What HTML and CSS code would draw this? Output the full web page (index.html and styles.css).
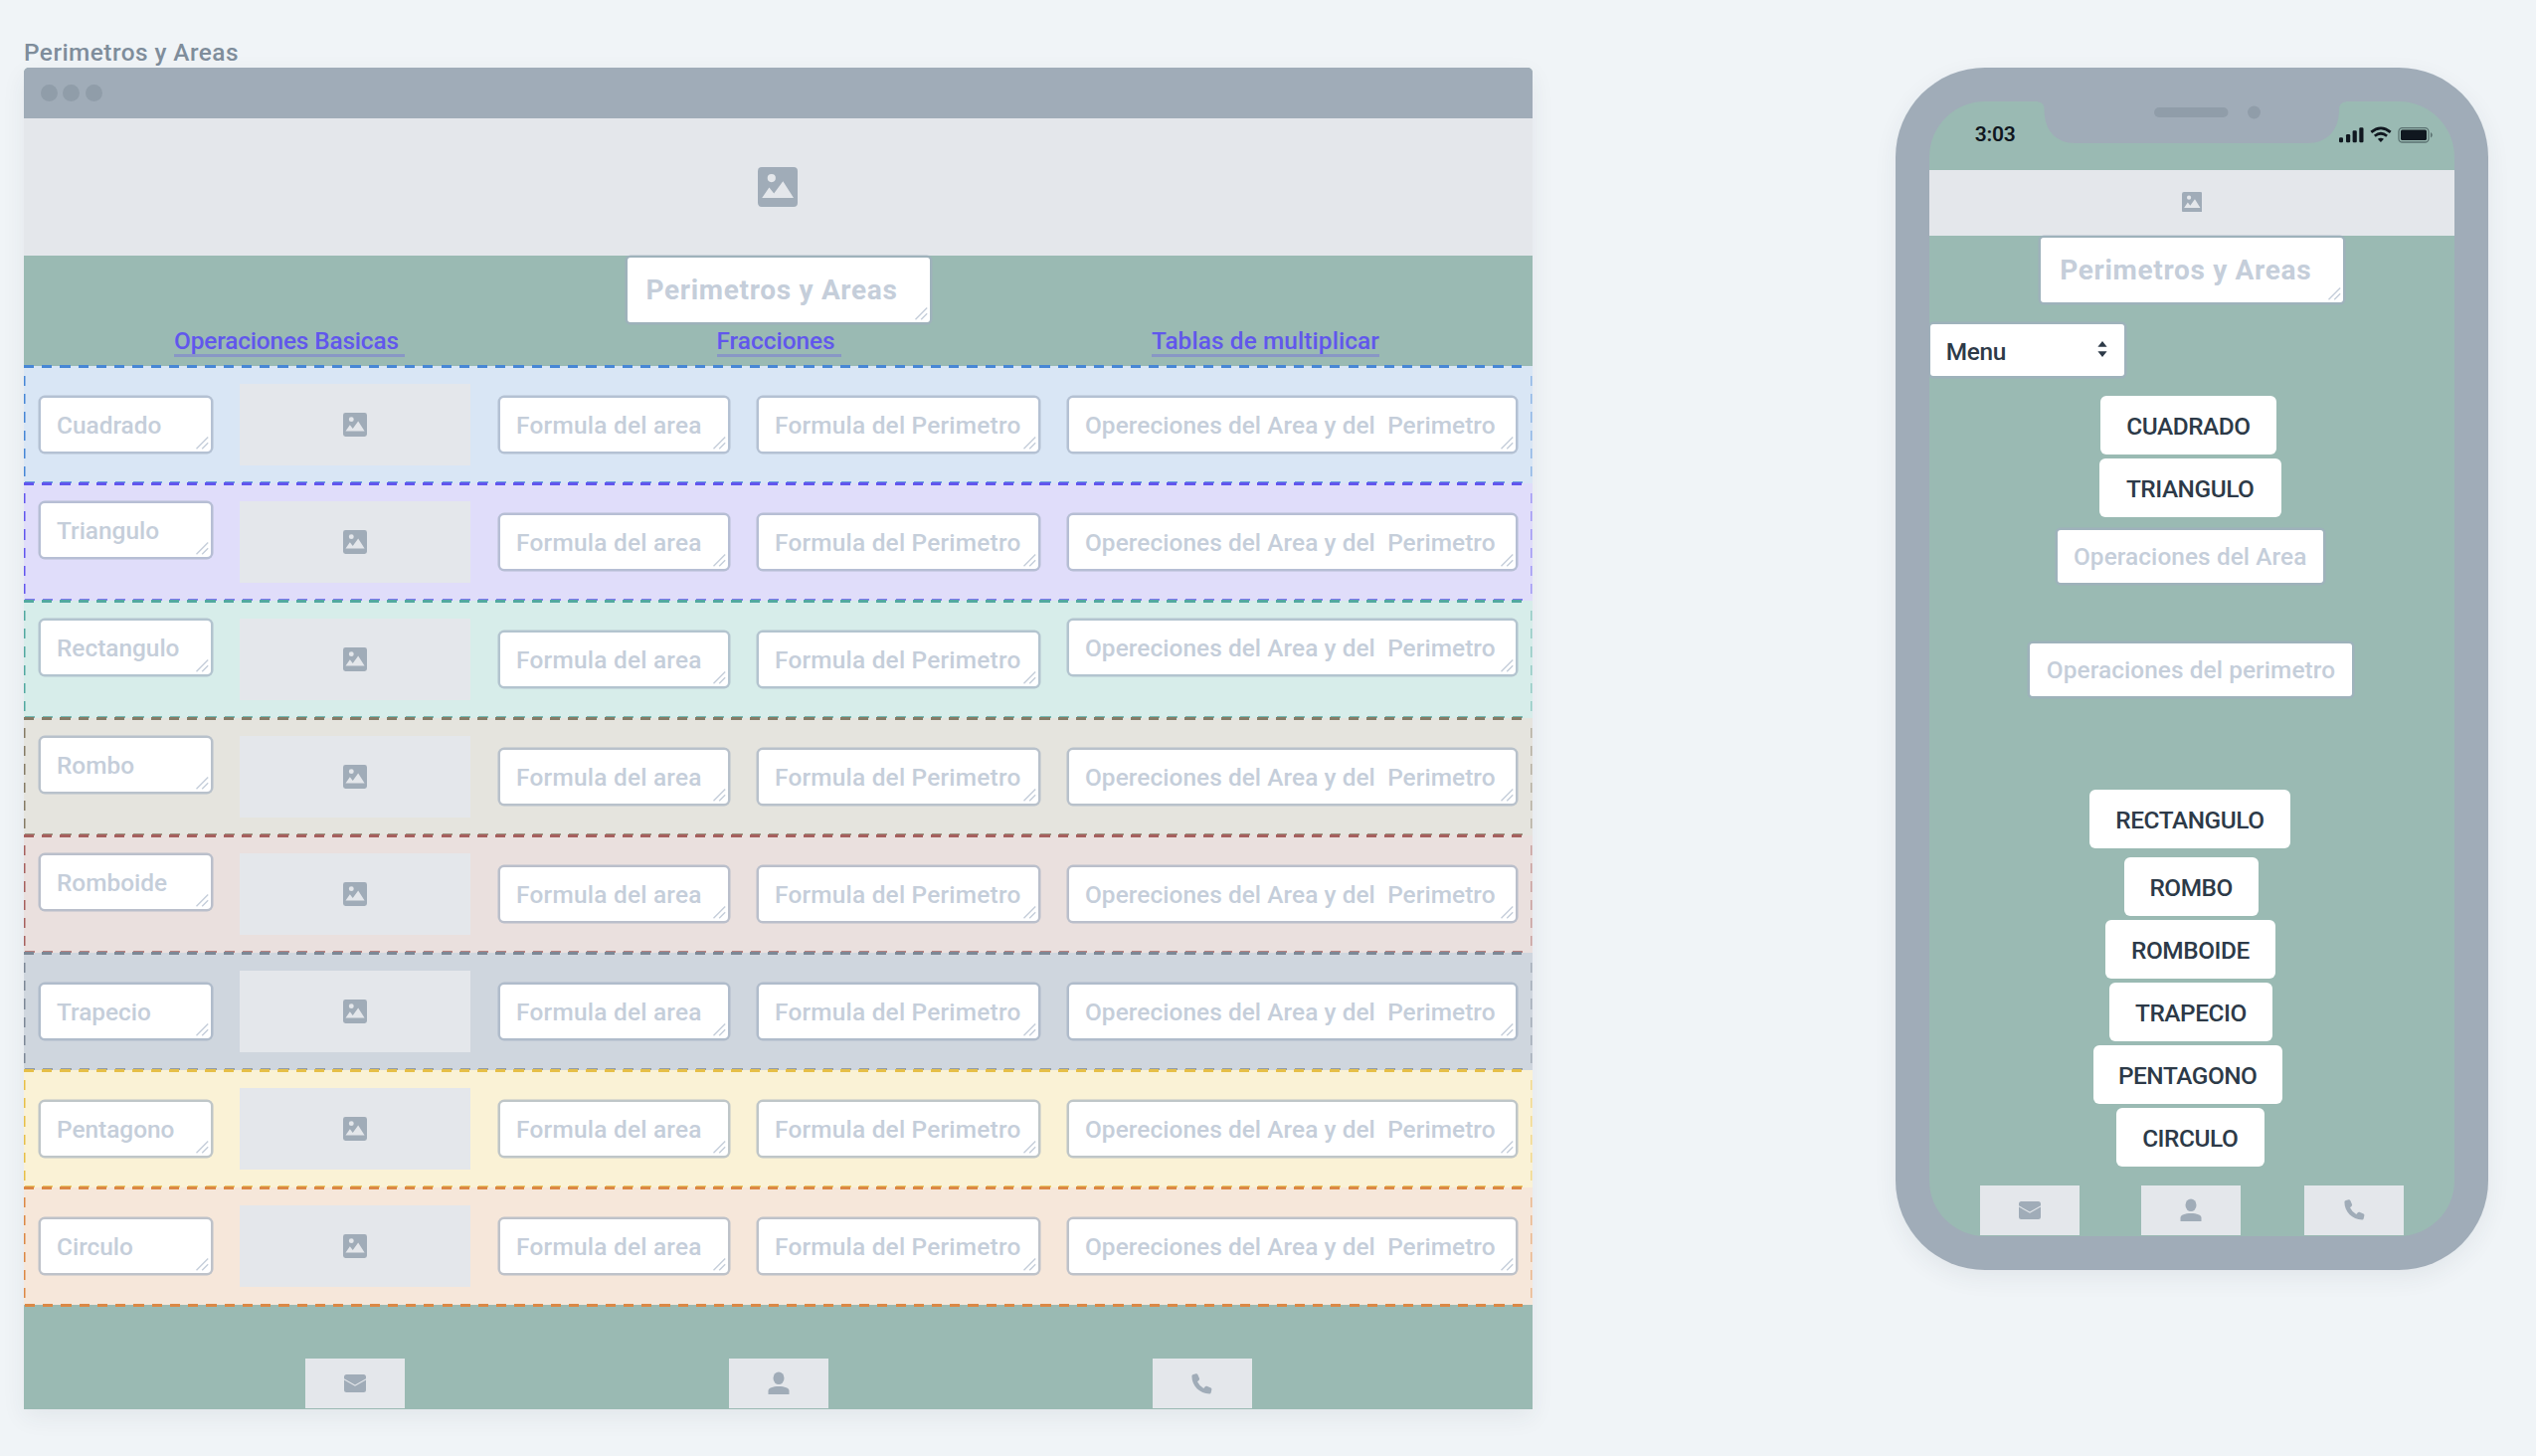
FILE: index.html
```
<!DOCTYPE html>
<html lang="es">
<head>
<meta charset="utf-8">
<title>Perimetros y Areas</title>
<link rel="stylesheet" href="styles.css">
</head>
<body>
<svg class="defs" aria-hidden="true">
  <symbol id="photo" viewBox="0 0 40 40"><path fill-rule="evenodd" d="M4 0H36a4 4 0 0 1 4 4V36a4 4 0 0 1-4 4H4a4 4 0 0 1-4-4V4a4 4 0 0 1 4-4ZM13.8 7a4.1 4.1 0 1 0 0 8.200a4.100 4.100 0 0 0 0-8.200ZM4.200 31H36L25.300 14.200 16.200 26.600 11.400 20.500Z"/></symbol>
  <symbol id="mail" viewBox="0 0 22 18"><path d="M2.500 0h17A2.500 2.500 0 0 1 22 2.500v1.800L11 10.400 0 4.300V2.500A2.500 2.500 0 0 1 2.500 0ZM0 5.600l11 6.200 11-6.200v9.900a2.500 2.500 0 0 1-2.500 2.500h-17A2.500 2.500 0 0 1 0 15.500Z"/></symbol>
  <symbol id="person" viewBox="0 0 22 24"><ellipse cx="11" cy="6.800" rx="5.500" ry="6.300"/><path d="M.5 23v-3.500C.5 16.500 5 15 11 15s10.500 1.500 10.500 4.500V23Z"/></symbol>
  <symbol id="phone" viewBox="0 0 21 21"><path d="M.4 2.600Q.6 1.300 1.900 1L4.600.3Q5.900.1 6.400 1.200L8 5Q8.400 6 7.600 6.800L6 8.300Q8 12.600 12.300 15L13.800 13.200Q14.500 12.400 15.500 12.800L19.600 14.600Q20.600 15.100 20.400 16.100L19.700 19.200Q19.400 20.400 18.100 20.400C8.300 20.400.4 12.600.4 2.600Z"/></symbol>
  <symbol id="grip" viewBox="0 0 14 14"><path d="M1.500 13.200 13.200 1.500M7.200 13.200l6-6" fill="none" stroke="#c5ceda" stroke-width="1.400"/></symbol>
</svg>

<main class="board">
  <section class="desktop">
    <h1 class="caption">Perimetros y Areas</h1>
    <div class="window">
      <div class="bar"><i></i><i></i><i></i></div>
      <div class="banner"><svg class="ic-lg"><use href="#photo"/></svg></div>
      <header class="head">
        <div class="field heading"><span>Perimetros y Areas</span><svg class="grip"><use href="#grip"/></svg></div>
        <nav class="links"><a class="l-op">Operaciones Basicas </a><a class="l-fr">Fracciones </a><a class="l-ta">Tablas de multiplicar</a></nav>
      </header>
      <div class="rows" id="rows"></div>
      <footer class="foot">
        <div class="tile"><svg class="ic-mail"><use href="#mail"/></svg></div>
        <div class="tile"><svg class="ic-person"><use href="#person"/></svg></div>
        <div class="tile"><svg class="ic-phone"><use href="#phone"/></svg></div>
      </footer>
    </div>
  </section>

  <section class="phone">
    <div class="screen">
      <div class="status">
        <time>3:03</time>
        <svg class="indicators" viewBox="0 0 96 18">
          <g fill="#10171f"><rect x="0" y="11.200" width="4" height="5" rx="1.300"/><rect x="7" y="8" width="4.200" height="8.200" rx="1.300"/><rect x="13.600" y="4.300" width="4.200" height="11.900" rx="1.300"/><rect x="20.300" y="1.300" width="4.200" height="14.900" rx="1.300"/><path d="M38.800 12.700Q41.900 10.700 45 12.700L41.900 15.900Z"/><rect x="62" y="3.500" width="26" height="10.500" rx="1.500"/></g>
          <path d="M32.300 5.900Q42 -2 51.700 5.900M35.800 9.700Q42 4.800 48.100 9.700" fill="none" stroke="#10171f" stroke-width="2.700"/>
          <rect x="60" y="1.600" width="30" height="14.400" rx="3.600" fill="none" stroke="#5b7271" stroke-width="1.300"/>
          <path d="M92 6q1.800 1 1.800 2.800T92 11.500Z" fill="#5b7271"/>
        </svg>
      </div>
      <div class="banner small"><svg class="ic-sm"><use href="#photo"/></svg></div>
      <div class="field heading mobile"><span>Perimetros y Areas</span><svg class="grip"><use href="#grip"/></svg></div>
      <div class="field select"><span>Menu</span><svg class="arrows" viewBox="0 0 10 16"><path d="M5 0 9.600 5.700H.4ZM5 16 .4 10.300H9.600Z"/></svg></div>
      <button class="btn b1">CUADRADO</button>
      <button class="btn b2">TRIANGULO</button>
      <div class="field input in1"><span>Operaciones del Area</span></div>
      <div class="field input in2"><span>Operaciones del perimetro</span></div>
      <button class="btn b3">RECTANGULO</button>
      <button class="btn b4">ROMBO</button>
      <button class="btn b5">ROMBOIDE</button>
      <button class="btn b6">TRAPECIO</button>
      <button class="btn b7">PENTAGONO</button>
      <button class="btn b8">CIRCULO</button>
      <footer class="foot mobile-foot">
        <div class="tile"><svg class="ic-mail"><use href="#mail"/></svg></div>
        <div class="tile"><svg class="ic-person"><use href="#person"/></svg></div>
        <div class="tile"><svg class="ic-phone"><use href="#phone"/></svg></div>
      </footer>
    </div>
    <svg class="notch" viewBox="0 0 310 44"><path d="M0 0H310V1.500Q303 1.500 303 9C303 30 291 43 271 43H38C18 43 6.500 30 6.500 9Q6.500 1.500 0 1.500Z" fill="#a0acb8"/><rect x="117" y="7" width="74.500" height="10" rx="5" fill="#909da9"/><circle cx="217.500" cy="12" r="6.500" fill="#909da9"/></svg>
  </section>
</main>
<script src="rows.js"></script>
</body>
</html>
```

FILE: rows.js
```
// One row per shape: name, colour class, and which fields sit higher in the row.
const shapes = [
  ["Cuadrado", "blue", "", ""],
  ["Triangulo", "violet", "up", ""],
  ["Rectangulo", "teal", "up", "up"],
  ["Rombo", "brown", "up", ""],
  ["Romboide", "red", "up", ""],
  ["Trapecio", "slate", "", ""],
  ["Pentagono", "yellow", "", ""],
  ["Circulo", "orange", "", ""]
];
const field = (cls, text) =>
  `<div class="field area ${cls}"><span>${text}</span><svg class="grip"><use href="#grip"/></svg></div>`;
document.getElementById("rows").innerHTML = shapes.map(([name, color, nameUp, opsUp]) =>
  `<div class="row ${color}">` +
  field("f-name " + nameUp, name) +
  `<div class="pic"><svg class="ic-md"><use href="#photo"/></svg></div>` +
  field("f-area", "Formula del area") +
  field("f-peri", "Formula del Perimetro") +
  field("f-ops " + opsUp, "Opereciones del Area y del  Perimetro") +
  `</div>`).join("");
```

FILE: styles.css
```
* { box-sizing: border-box; }
body {
  margin: 0;
  background: #f0f4f7;
  font: 500 24.4px/28px Roboto, "Liberation Sans", sans-serif;
  overflow: hidden;
}
.defs { display: none; }
svg { display: block; fill: #a0acb8; }

.board { display: flex; height: 1464px; padding: 38px 0 0 24px; gap: 365.5px; align-items: flex-start; }
.desktop { width: 1516.5px; }
.caption { margin: 0; height: 30px; font-size: 24.4px; font-weight: 500; line-height: 29px; letter-spacing: .45px; color: #7f8d9b; }

.window {
  height: 1348.7px;
  background: #9abab3;
  border-radius: 5px 5px 0 0;
  box-shadow: 0 8px 24px rgba(40, 50, 70, .07);
}
.bar { height: 51px; background: #a0acb8; border-radius: 5px 5px 0 0; display: flex; align-items: center; gap: 5.5px; padding-left: 16.500px; }
.bar i { width: 17px; height: 17px; border-radius: 50%; background: #909da9; }
.banner { height: 138px; background: #e4e7eb; display: flex; align-items: center; justify-content: center; }
.ic-lg { width: 40px; height: 40px; }
.ic-md { width: 24px; height: 24px; }
.ic-sm { width: 20.500px; height: 20.500px; }

.field {
  position: relative;
  display: flex;
  align-items: center;
  background: #fff;
  border-radius: 3px;
  box-shadow: 0 0 0 2.500px rgba(160, 174, 192, .65);
  color: #c5ceda;
  white-space: pre;
}
.grip { position: absolute; right: 2px; bottom: 2px; width: 14px; height: 14px; }

.head { height: 111px; padding-top: 1.500px; }
.heading { width: 304.500px; height: 65.300px; margin-left: 606.500px; padding: 2px 0 0 19px; font-size: 28px; font-weight: 700; letter-spacing: .68px; }
.links { display: grid; grid-template-columns: 545.500px 437.500px auto; margin: 6.500px 0 0 151px; justify-items: start; }
.links a { line-height: 25.500px; white-space: pre; color: #6157ec; border-bottom: 3px solid #8897c6; }
.l-op { width: 232px; letter-spacing: -.15px; }
.l-fr { width: 125px; }
.l-ta { width: 229px; letter-spacing: .1px; }

.row {
  position: relative;
  height: 118px;
  padding-left: 16.500px;
  display: grid;
  grid-template-columns: 200px 262px 260px 312px 450px;
  align-items: start;
  background: var(--bg);
  --dash: var(--line) 0 10.200px, transparent 10.200px 18.240px;
  --faint: color-mix(in srgb, var(--line) 50%, var(--bg));
}
/* dashed frame, straddling the row edges */
.row::before {
  content: "";
  position: absolute;
  inset: -1px 0 0 0;
  background:
    repeating-linear-gradient(90deg, var(--dash)) 0 0 / 1509px 3px no-repeat,
    repeating-linear-gradient(180deg, var(--dash)) 0 11px / 1.500px 104px no-repeat,
    repeating-linear-gradient(180deg, var(--faint) 0 10.200px, transparent 10.200px 18.240px) 100% 11px / 1.500px 104px no-repeat;
}
.row::after {
  content: "";
  position: absolute;
  left: 1px;
  width: 1508px;
  height: 2px;
  bottom: 0;
  opacity: .75;
  background: repeating-linear-gradient(90deg, var(--dash));
}
.row:last-child::after { bottom: -2px; height: 3px; opacity: 1; }
.blue { --bg: #d9e6f5; --line: #4787d6; }
.violet { --bg: #e0ddfa; --line: #6156ee; }
.teal { --bg: #d7edea; --line: #52a8a0; }
.brown { --bg: #e5e4de; --line: #857b66; }
.red { --bg: #eae0de; --line: #a6605e; }
.slate { --bg: #cfd6de; --line: #7d8896; }
.yellow { --bg: #faf2d6; --line: #e6bf48; }
.orange { --bg: #f6e7da; --line: #db8845; }

.area { margin-top: 32.300px; height: 53.500px; padding: 2px 0 0 16.500px; border-radius: 4px; }
.area.up { margin-top: 20.300px; }
.f-name { width: 171.500px; letter-spacing: 0; }
.f-area { width: 229px; letter-spacing: .25px; }
.f-peri { width: 281px; letter-spacing: .22px; }
.f-ops { width: 449.500px; letter-spacing: .07px; }
.pic { margin-top: 18px; width: 232px; height: 82px; background: #e4e7eb; display: flex; align-items: center; justify-content: center; }
.pic svg { margin-top: -1px; }

.foot { display: grid; grid-template-columns: 426px 425.500px 100px; padding: 54px 0 0 283px; }
.tile { width: 100px; height: 50px; background: #e4e7eb; display: flex; align-items: center; justify-content: center; }
.ic-mail { width: 22px; height: 18px; }
.ic-person { width: 22px; height: 24px; }
.ic-phone { width: 21px; height: 21px; }

.phone {
  position: relative;
  width: 595.700px;
  height: 1208.700px;
  margin-top: 30px;
  padding: 34px 33.700px;
  border-radius: 90px;
  background: #a0acb8;
  box-shadow: 0 8px 24px rgba(40, 50, 70, .07);
}
.notch { position: absolute; left: 143px; top: 33px; width: 310px; height: 44px; }
.screen { height: 1140.700px; background: #9abab3; border-radius: 56px; overflow: hidden; display: flex; flex-direction: column; align-items: flex-start; }
.status { width: 100%; height: 69px; flex: none; display: flex; align-items: flex-start; justify-content: space-between; padding: 19px 22px 0 46px; font-size: 21px; color: #10171f; }
.status time { line-height: 28px; letter-spacing: -.2px; font-weight: 600; }
.indicators { width: 96px; height: 18px; margin-top: 5.500px; margin-right: -2px; }
.banner.small { width: 100%; height: 66px; flex: none; }
.small svg { margin-top: -2px; }
.mobile { margin: 1.500px 0 0 112px; padding-left: 19.500px; flex: none; }
.select { width: 194.500px; height: 52.500px; margin: 22px 0 0 1.500px; padding: 3px 17px 0 15.500px; justify-content: space-between; color: #2d3a48; letter-spacing: -.3px; }
.arrows { width: 10px; height: 16px; fill: #2d3a48; margin-top: -5px; }
.input { height: 53.300px; justify-content: center; letter-spacing: .08px; padding-top: 1px; }
.in1 { width: 267px; margin: 12.300px 0 0 129px; }
.in2 { width: 324.500px; margin: 60.700px 0 0 101px; }
.btn {
  height: 59px;
  margin-top: 4px;
  padding: 2px 0 0;
  border: 0;
  border-radius: 6px;
  background: #fff;
  color: #2d3a48;
  font: inherit;
  letter-spacing: -.45px;
}
.b1 { width: 177.500px; margin: 20.200px 0 0 172px; }
.b2 { width: 183px; margin-left: 171px; }
.b3 { width: 202.500px; margin: 94.300px 0 0 161px; }
.b4 { width: 135px; margin: 9px 0 0 196px; }
.b5 { width: 171.500px; margin-left: 177px; }
.b6 { width: 164.500px; margin-left: 181px; }
.b7 { width: 190px; margin-left: 165px; }
.b8 { width: 149px; margin-left: 188px; }
.mobile-foot { grid-template-columns: 162px 164px 100px; padding: 18.500px 0 0 51.500px; }
```
